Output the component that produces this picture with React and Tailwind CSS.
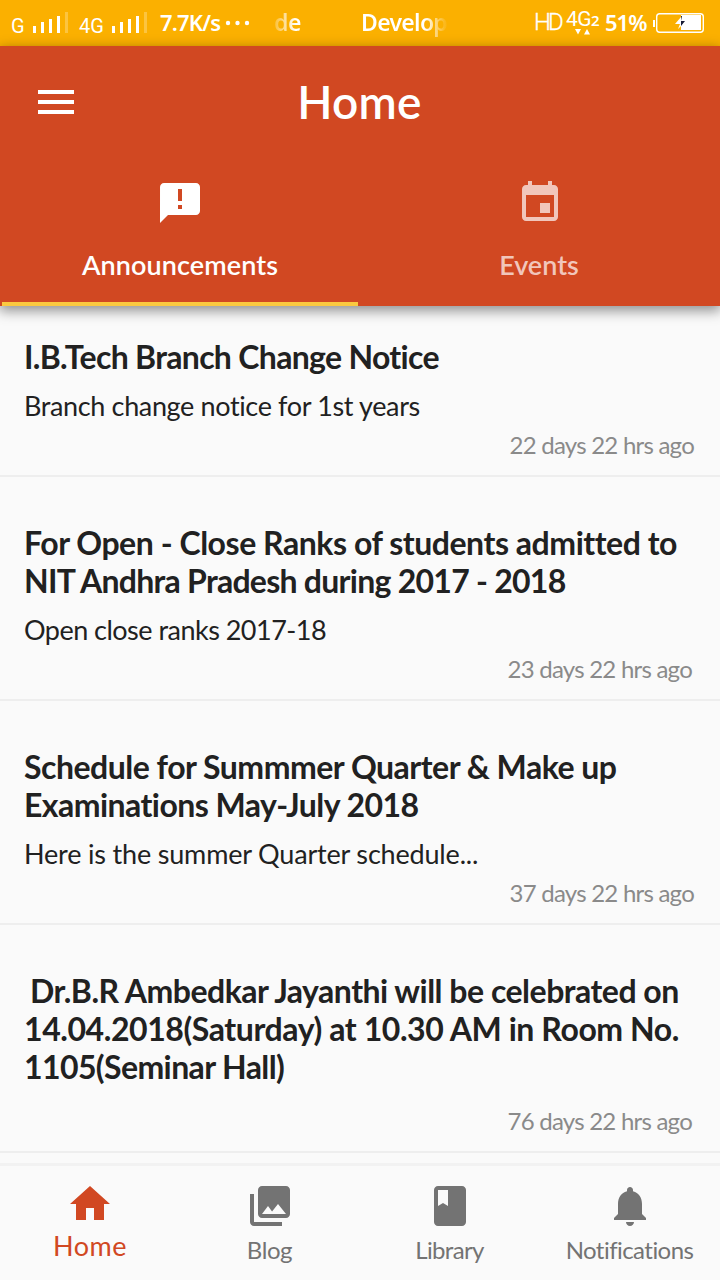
import React from "react";

const announcements = [
  {
    title: [["I.B.Tech Branch Change Notice", "tracking-[-0.69px]"]],
    body: "Branch change notice for 1st years",
    bodyClass: "tracking-[-0.36px]",
    time: "22 days 22 hrs ago",
    top: "pt-[32px]",
    right: "pr-[26px]",
  },
  {
    title: [
      ["For Open - Close Ranks of students admitted to", "tracking-[-0.46px]"],
      ["NIT Andhra Pradesh during 2017 - 2018", "tracking-[-0.74px]"],
    ],
    body: "Open close ranks 2017-18",
    bodyClass: "tracking-[-0.52px]",
    time: "23 days 22 hrs ago",
    top: "pt-[47px]",
    right: "pr-[28px]",
  },
  {
    title: [
      ["Schedule for Summmer Quarter & Make up", "tracking-[-0.5px]"],
      ["Examinations May-July 2018", "tracking-[-0.55px]"],
    ],
    body: "Here is the summer Quarter schedule...",
    bodyClass: "tracking-[-0.18px]",
    time: "37 days 22 hrs ago",
    top: "pt-[47px]",
    right: "pr-[26px]",
  },
  {
    title: [
      ["Dr.B.R Ambedkar Jayanthi will be celebrated on", "tracking-[-0.5px] pl-1.5"],
      ["14.04.2018(Saturday) at 10.30 AM in Room No.", "tracking-[-0.42px]"],
      ["1105(Seminar Hall)", "tracking-[-0.6px]"],
    ],
    time: "76 days 22 hrs ago",
    top: "pt-[47px]",
    right: "pr-[28px]",
  },
];

const tabs = [
  {
    label: "Home",
    active: true,
    tracking: "tracking-[0.5px]",
    path: "M10 20v-6h4v6h5v-8h3L12 3 2 12h3v8z",
  },
  {
    label: "Blog",
    tracking: "tracking-[-0.4px]",
    path: "M22 16V4c0-1.1-.9-2-2-2H8c-1.1 0-2 .9-2 2v12c0 1.1.9 2 2 2h12c1.1 0 2-.9 2-2zm-11-4l2.03 2.71L16 11l4 5H8l3-4zM2 6v14c0 1.1.9 2 2 2h14v-2H4V6H2z",
  },
  {
    label: "Library",
    tracking: "tracking-[-0.65px]",
    path: "M18 2H6c-1.1 0-2 .9-2 2v16c0 1.1.9 2 2 2h12c1.1 0 2-.9 2-2V4c0-1.1-.9-2-2-2zM6 4h5v8l-2.500-1.500L6 12V4z",
  },
  {
    label: "Notifications",
    tracking: "tracking-[-0.55px]",
    path: "M12 22c1.1 0 2-.9 2-2h-4c0 1.1.89 2 2 2zm6-6v-5c0-3.07-1.64-5.64-4.5-6.32V4c0-.83-.67-1.5-1.5-1.5s-1.5.67-1.5 1.5v.68C7.63 5.36 6 7.92 6 11v5l-2 2v1h16v-1l-2-2z",
  },
];

function Icon({ path, className = "" }) {
  return (
    <svg viewBox="0 0 24 24" className={`size-12 shrink-0 fill-current ${className}`}>
      <path d={path} />
    </svg>
  );
}

function Signal() {
  return (
    <svg viewBox="0 0 38 22" className="h-[22px] w-[38px] shrink-0 fill-white">
      <path d="M1 14h3v7H1zM9 10h3v11H9zM17 7h3v14h-3zM25 4h3v17h-3z" />
      <path d="M33 0h3v21h-3z" opacity="0.25" />
    </svg>
  );
}

function StatusBar() {
  return (
    <div className="flex h-[46px] items-start bg-[#fbb000] pl-[11px] font-['Noto_Sans',sans-serif] text-[23px] leading-[46px] font-semibold whitespace-nowrap text-white">
      <span className="w-[21px] pt-[3px] font-['Roboto',sans-serif] text-[20px] font-normal">G</span>
      <div className="pt-3">
        <Signal />
      </div>
      <span className="ml-[9px] w-[32px] pt-[3px] font-['Roboto',sans-serif] text-[20px] font-normal">4G</span>
      <div className="pt-3">
        <Signal />
      </div>
      <span className="ml-[11px] w-[65px] text-[22px] leading-[44px] tracking-[-0.8px]">7.7K/s</span>
      <svg viewBox="0 0 26 46" className="h-[46px] w-[26px] fill-white">
        <circle cx="3" cy="23" r="2.2" />
        <circle cx="12.5" cy="23" r="2.2" />
        <circle cx="22" cy="23" r="2.2" />
      </svg>
      <span className="ml-[23px] w-[87px] bg-gradient-to-r from-white/20 to-white to-[22px] bg-clip-text leading-[44px] tracking-[-0.5px] text-transparent">de</span>
      <span className="w-[88px] bg-gradient-to-r from-white from-[64px] to-white/10 to-[84px] bg-clip-text leading-[44px] tracking-[-0.7px] text-transparent">Develop</span>
      <span className="ml-[85px] w-[32px] font-['Roboto',sans-serif] text-[24px] leading-[45px] font-light tracking-[-3px] [-webkit-text-stroke:0.3px_white]">HD</span>
      <div className="flex w-[38px] flex-col">
        <div className="flex h-[28px] pt-[1px]">
          <span className="font-['Roboto',sans-serif] text-[21px] leading-[37px] font-normal tracking-[-0.6px]">4G</span>
          <span className="text-[15px] leading-[39px]">2</span>
        </div>
        <svg viewBox="0 0 20 7" className="ml-[7px] h-[7px] w-5 fill-white">
          <path d="M2 1h6L5 6.500zM11 6.500h6L14 1z" />
        </svg>
      </div>
      <span className="ml-px w-[48px] text-[22px] leading-[45px] tracking-[-1px]">51%</span>
      <svg viewBox="0 0 52 46" className="h-[46px] w-[52px] shrink-0">
        <rect x="0" y="20" width="2" height="7" fill="white" />
        <rect x="3.700" y="13.700" width="46.600" height="18.600" rx="3" fill="none" stroke="white" strokeWidth="1.400" />
        <path d="M28 15h20v15H28z" fill="white" />
        <path d="M28 17l-6 7h5l-2 5 3-3z" fill="white" />
        <path d="M28 16l1 0-1 5h4l-4 5z" fill="#161a33" />
      </svg>
    </div>
  );
}

function Header() {
  return (
    <header className="relative z-10 flex h-[260px] flex-col bg-[#d14822] text-white shadow-[0_4px_12px_1px_rgba(0,0,0,0.42)]">
      <div className="grid h-[112px] grid-cols-[112px_1fr_112px] items-center">
        <svg viewBox="0 0 36 24" className="ml-[38px] h-6 w-9 fill-white">
          <path d="M0 0h36v4H0zM0 10h36v4H0zM0 20h36v4H0z" />
        </svg>
        <h1 className="pr-px text-center text-[46px] leading-[56px] font-semibold tracking-[0.3px]">Home</h1>
      </div>
      <nav className="grid flex-1 grid-cols-2">
        <div className="flex flex-col items-center pt-[21px]">
          <Icon path="M20 2H4c-1.1 0-1.99.9-1.99 2L2 22l4-4h14c1.1 0 2-.9 2-2V4c0-1.1-.9-2-2-2zm-7 9h-2V5h2v6zm0 4h-2v-2h2v2z" />
          <span className="mt-[22px] text-[27px] leading-[32px] font-semibold tracking-[0.1px]">Announcements</span>
          <div className="mt-auto h-1 w-[356px] bg-[#fbc940]" />
        </div>
        <div className="flex flex-col items-center pt-[21px] text-[#f1c6bb]">
          <Icon path="M17 12h-5v5h5v-5zM16 1v2H8V1H6v2H5c-1.11 0-1.99.9-1.99 2L3 19c0 1.1.89 2 2 2h14c1.1 0 2-.9 2-2V5c0-1.1-.9-2-2-2h-1V1h-2zm3 18H5V8h14v11z" />
          <span className="mt-[22px] pr-0.5 text-[27px] leading-[32px] font-semibold">Events</span>
        </div>
      </nav>
    </header>
  );
}

function Announcement({ item }) {
  return (
    <article className={`border-b-2 border-[#eeeeee] pb-4 ${item.top}`}>
      <h2 className="flex flex-col pl-6 text-[32px] leading-[38px] font-bold whitespace-nowrap text-[#212121]">
        {item.title.map(([line, className]) => (
          <span key={line} className={className}>{line}</span>
        ))}
      </h2>
      {item.body ? (
        <p className={`mt-[14px] pl-6 text-[27px] leading-[32px] whitespace-nowrap text-[#212121] ${item.bodyClass}`}>{item.body}</p>
      ) : null}
      <p className={`text-right text-2xl leading-[29px] tracking-[-0.76px] text-[#8a8a8a] ${item.body ? "mt-2" : "mt-5"} ${item.right}`}>{item.time}</p>
    </article>
  );
}

function BottomNav() {
  return (
    <nav className="mt-auto grid h-[117px] grid-cols-4 border-t-3 border-[#f2f2f2] bg-[#fafafa]">
      {tabs.map((tab) =>
        tab.active ? (
          <div key={tab.label} className="flex flex-col items-center pt-[14px] text-[#d14822]">
            <Icon path={tab.path} />
            <span className={`mt-[2px] text-[27px] leading-[32px] ${tab.tracking}`}>{tab.label}</span>
          </div>
        ) : (
          <div key={tab.label} className="flex flex-col items-center pt-4 text-[#737373]">
            <Icon path={tab.path} />
            <span className={`mt-[5px] pr-px text-2xl leading-[29px] ${tab.tracking}`}>{tab.label}</span>
          </div>
        ),
      )}
    </nav>
  );
}

export default function App() {
  return (
    <div className="flex h-[1280px] w-[720px] flex-col overflow-hidden bg-[#fafafa] font-['Lato',sans-serif] [font-variant-ligatures:none]">
      <StatusBar />
      <Header />
      <main>
        {announcements.map((item) => (
          <Announcement key={item.time} item={item} />
        ))}
      </main>
      <BottomNav />
    </div>
  );
}
